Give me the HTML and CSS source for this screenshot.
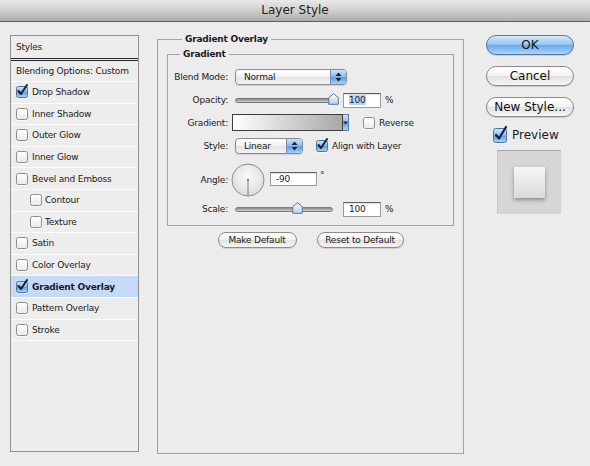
FILE: index.html
```html
<!DOCTYPE html>
<html>
<head>
<meta charset="utf-8">
<title>Layer Style</title>
<link rel="stylesheet" href="styles.css">
</head>
<body>
<div class="titlebar">Layer Style</div>
<div class="dialog">
  <div class="styles-list">
    <div class="row head">Styles</div>
    <div class="row blend">Blending Options: Custom</div>
    <div class="row"><span class="cb on"><svg width="13" height="14" viewBox="0 0 13 14"><path d="M2.5 8 L5 11 L11 2" fill="none" stroke="#18203a" stroke-width="2" stroke-linecap="round" stroke-linejoin="round"/></svg></span>Drop Shadow</div>
    <div class="row"><span class="cb"></span>Inner Shadow</div>
    <div class="row"><span class="cb"></span>Outer Glow</div>
    <div class="row"><span class="cb"></span>Inner Glow</div>
    <div class="row"><span class="cb"></span>Bevel and Emboss</div>
    <div class="row sub"><span class="cb"></span>Contour</div>
    <div class="row sub"><span class="cb"></span>Texture</div>
    <div class="row"><span class="cb"></span>Satin</div>
    <div class="row"><span class="cb"></span>Color Overlay</div>
    <div class="row selected"><span class="cb on"><svg width="13" height="14" viewBox="0 0 13 14"><path d="M2.5 8 L5 11 L11 2" fill="none" stroke="#18203a" stroke-width="2" stroke-linecap="round" stroke-linejoin="round"/></svg></span>Gradient Overlay</div>
    <div class="row"><span class="cb"></span>Pattern Overlay</div>
    <div class="row"><span class="cb"></span>Stroke</div>
  </div>

  <div class="main">
    <div class="group outer">
      <div class="legend outer-legend">Gradient Overlay</div>
      <div class="group inner">
        <div class="legend inner-legend">Gradient</div>
        <div class="form">
          <div class="frow r1">
            <span class="lbl">Blend Mode:</span>
            <div class="popup w-blend"><span class="ptext">Normal</span><span class="stepper"><svg width="7" height="10" viewBox="0 0 7 10"><path d="M3.5 0.5 L6.5 4 L0.5 4 Z M0.5 6 L6.5 6 L3.5 9.5 Z" fill="#1c2433"/></svg></span></div>
          </div>
          <div class="frow r2">
            <span class="lbl">Opacity:</span>
            <div class="slider w-op"><span class="knob k-op"><svg width="11" height="12" viewBox="0 0 11 12"><defs><linearGradient id="kg1" x1="0" y1="0" x2="0" y2="1"><stop offset="0" stop-color="#ffffff"/><stop offset="1" stop-color="#b9cfe6"/></linearGradient></defs><path d="M5.5 0.7 L10.3 4.6 L10.3 11.3 L0.7 11.3 L0.7 4.6 Z" fill="url(#kg1)" stroke="#58779c" stroke-width="1" stroke-linejoin="round"/></svg></span></div>
            <div class="num"><span class="sel">100</span></div>
            <span class="unit">%</span>
          </div>
          <div class="frow r3">
            <span class="lbl">Gradient:</span>
            <div class="gradbox"></div>
            <div class="gradarrow"><svg width="5" height="4" viewBox="0 0 5 4"><path d="M0 0.5 L5 0.5 L2.5 3.5 Z" fill="#1c2433"/></svg></div>
            <span class="cb rev"></span><span class="cbtext">Reverse</span>
          </div>
          <div class="frow r4">
            <span class="lbl">Style:</span>
            <div class="popup w-style"><span class="ptext">Linear</span><span class="stepper"><svg width="7" height="10" viewBox="0 0 7 10"><path d="M3.5 0.5 L6.5 4 L0.5 4 Z M0.5 6 L6.5 6 L3.5 9.5 Z" fill="#1c2433"/></svg></span></div>
            <span class="cb on align"><svg width="13" height="14" viewBox="0 0 13 14"><path d="M2.5 8 L5 11 L11 2" fill="none" stroke="#18203a" stroke-width="2" stroke-linecap="round" stroke-linejoin="round"/></svg></span><span class="cbtext">Align with Layer</span>
          </div>
          <div class="frow r5">
            <span class="lbl">Angle:</span>
            <div class="dial"><svg width="34" height="34" viewBox="0 0 34 34"><defs><radialGradient id="dg" cx="50%" cy="40%" r="60%"><stop offset="0" stop-color="#fbfbfb"/><stop offset="1" stop-color="#dcdcdc"/></radialGradient></defs><circle cx="17" cy="17" r="16" fill="url(#dg)" stroke="#8c8c8c" stroke-width="1"/><line x1="17" y1="17" x2="17" y2="33" stroke="#7d7d7d" stroke-width="1"/><circle cx="17" cy="17" r="1" fill="#6d6d6d"/></svg></div>
            <div class="num angle">-90</div>
            <span class="deg">°</span>
          </div>
          <div class="frow r6">
            <span class="lbl">Scale:</span>
            <div class="slider w-sc"><span class="knob k-sc"><svg width="11" height="12" viewBox="0 0 11 12"><defs><linearGradient id="kg2" x1="0" y1="0" x2="0" y2="1"><stop offset="0" stop-color="#ffffff"/><stop offset="1" stop-color="#b9cfe6"/></linearGradient></defs><path d="M5.5 0.7 L10.3 4.6 L10.3 11.3 L0.7 11.3 L0.7 4.6 Z" fill="url(#kg2)" stroke="#58779c" stroke-width="1" stroke-linejoin="round"/></svg></span></div>
            <div class="num">100</div>
            <span class="unit">%</span>
          </div>
        </div>
      </div>
      <div class="defaults">
        <div class="sbtn w-make">Make Default</div>
        <div class="sbtn w-reset">Reset to Default</div>
      </div>
    </div>
  </div>

  <div class="side">
    <div class="btn ok">OK</div>
    <div class="btn">Cancel</div>
    <div class="btn">New Style...</div>
    <div class="preview-row">
      <span class="cb on big"><svg width="15" height="17" viewBox="0 0 15 17"><path d="M3 10 L6 13.5 L13 2" fill="none" stroke="#18203a" stroke-width="2.2" stroke-linecap="round" stroke-linejoin="round"/></svg></span>
      <span class="ptitle">Preview</span>
    </div>
    <div class="preview-box"><div class="swatch"></div></div>
  </div>
</div>
</body>
</html>
```

FILE: styles.css
```css
html, body {
  margin: 0;
  padding: 0;
  background: #ececec;
}
body {
  font-family: "DejaVu Sans", "Liberation Sans", sans-serif;
  font-size: 9px;
  letter-spacing: -0.2px;
  color: #1a1a1a;
  width: 590px;
  height: 466px;
  overflow: hidden;
}

/* title bar */
.titlebar {
  height: 21px;
  line-height: 21px;
  border-bottom: 1px solid #5f5f5f;
  background: linear-gradient(#e9e9e9, #cfcfcf 50%, #adadad);
  text-align: center;
  font-size: 12px;
  letter-spacing: 0;
  color: #1e1e1e;
}

.dialog {
  display: flex;
  align-items: flex-start;
  padding: 13px 0 0 10px;
}

/* styles list */
.styles-list {
  width: 129px;
  height: 417px;
  box-sizing: border-box;
  border: 1px solid #929292;
  background: #ededed;
  flex: none;
}
.row {
  height: 20.6px;
  border-bottom: 1px solid #fbfbfb;
  display: flex;
  align-items: center;
  padding-left: 5px;
  gap: 4px;
}
.row.head {
  height: 22px;
  border-bottom: 3px double #2a2a2a;
}
.row.blend {
  height: 20px;
}
.row.sub {
  padding-left: 19px;
  gap: 3px;
}
.row.selected {
  background: #c4daf6;
  font-weight: bold;
}

/* checkboxes */
.cb {
  display: inline-block;
  width: 12px;
  height: 12px;
  box-sizing: border-box;
  border: 1px solid #8d8d8d;
  border-radius: 2.5px;
  background: linear-gradient(#ffffff, #eaeaea);
  box-shadow: 0 1px 0 rgba(255,255,255,0.7);
  flex: none;
  position: relative;
}
.cb.on {
  background: linear-gradient(#cde3fb, #85b9ef 50%, #5c9ee6 52%, #a6d0f7);
  border-color: #52709e;
}
.cb.on svg {
  position: absolute;
  left: -1px;
  top: -4px;
}
.cb.big {
  width: 14px;
  height: 15px;
}
.cb.big svg {
  left: -1px;
  top: -4px;
}

/* main */
.main {
  margin-left: 18px;
  margin-top: 4px;
  width: 307px;
  flex: none;
}
.group {
  border: 1px solid #a2a2a2;
}
.group.outer {
  height: 415px;
  box-sizing: border-box;
  padding: 0 9px;
}
.legend {
  display: block;
  width: max-content;
  line-height: 12px;
  height: 12px;
  margin-top: -7px;
  padding: 0 3px;
  background: #ececec;
  font-weight: bold;
}
.outer-legend {
  margin-left: 15px;
}
.inner-legend {
  margin-left: 12px;
}
.group.inner {
  margin-top: 9px;
}
.form {
  padding: 5px 0 8px 0;
}
.frow {
  display: flex;
  align-items: center;
}
.r1 { height: 23px; }
.r2 { height: 24px; }
.r3 { height: 21px; }
.r4 { height: 26px; }
.r5 { height: 42px; }
.r6 { height: 16px; }

.lbl {
  width: 60px;
  text-align: right;
  margin-right: 7px;
  flex: none;
}

/* popups */
.popup {
  display: flex;
  height: 16px;
  box-sizing: border-box;
  border: 1px solid #8b8b8b;
  border-radius: 4px;
  background: linear-gradient(#ffffff, #f2f2f2 50%, #e3e3e3 52%, #f4f4f4);
  box-shadow: 0 1px 1px rgba(0,0,0,0.12);
  overflow: hidden;
}
.w-blend { width: 112px; }
.w-style { width: 68px; }
.ptext {
  flex: 1;
  padding-left: 8px;
  line-height: 14px;
}
.stepper {
  width: 15px;
  border-left: 1px solid #6a8cbc;
  background: linear-gradient(#c9e1fa, #86bbef 50%, #5d9fe7 52%, #a3cff7);
  display: flex;
  align-items: center;
  justify-content: center;
}

/* sliders */
.slider {
  position: relative;
  height: 3px;
  border: 1px solid #7b7b7b;
  border-radius: 3px;
  background: linear-gradient(#8a8a8a, #cfcfcf);
  flex: none;
}
.w-op { width: 99px; margin-right: 7px; }
.w-sc { width: 96px; margin-right: 10px; }
.knob {
  position: absolute;
  top: -6px;
  width: 11px;
  height: 12px;
}
.knob svg { display: block; }
.k-op { left: 92px; }
.k-sc { left: 56px; }

/* number fields */
.num {
  width: 38px;
  height: 15px;
  box-sizing: border-box;
  border: 1px solid #9a9a9a;
  border-top-color: #5e5e5e;
  background: #ffffff;
  padding-left: 5px;
  line-height: 13px;
  box-shadow: inset 0 1px 1px rgba(0,0,0,0.12);
  flex: none;
}
.num .sel {
  background: #b4d4fd;
}
.num.angle {
  width: 47px;
  height: 14px;
  margin-left: 5px;
  margin-top: -3px;
}
.unit {
  margin-left: 4px;
}
.deg {
  margin-left: 3px;
  align-self: flex-start;
  margin-top: 11px;
}

/* gradient row */
.gradbox {
  margin-left: -3px;
  width: 111px;
  height: 17px;
  box-sizing: border-box;
  border: 1px solid #3d3d3d;
  background: linear-gradient(to right, #ffffff, #a8a8a8);
}
.gradarrow {
  width: 6px;
  height: 17px;
  box-sizing: border-box;
  border: 1px solid #5b7aa4;
  border-left: none;
  background: linear-gradient(#c9e1fa, #86bbef 50%, #5d9fe7 52%, #a3cff7);
  display: flex;
  align-items: center;
  justify-content: center;
}
.gradarrow svg { display: block; }
.cb.rev {
  margin-left: 14px;
}
.cb.align {
  margin-left: 13px;
}
.cbtext {
  margin-left: 4px;
}

/* dial */
.dial {
  margin-left: -4px;
  width: 34px;
  height: 34px;
}
.dial svg { display: block; }

/* defaults buttons */
.defaults {
  display: flex;
  justify-content: center;
  gap: 20px;
  margin-top: 6px;
}
.sbtn {
  height: 16px;
  box-sizing: border-box;
  border: 1px solid #8c8c8c;
  border-radius: 8px;
  background: linear-gradient(#ffffff, #f1f1f1 50%, #e2e2e2 52%, #f5f5f5);
  box-shadow: 0 1px 1px rgba(0,0,0,0.12);
  display: flex;
  align-items: center;
  justify-content: center;
}
.w-make { width: 79px; }
.w-reset { width: 87px; }

/* side */
.side {
  margin-left: 22px;
  width: 88px;
  display: flex;
  flex-direction: column;
  align-items: center;
  flex: none;
}
.btn {
  width: 88px;
  height: 20px;
  box-sizing: border-box;
  border: 1px solid #8a8a8a;
  border-radius: 10px;
  background: linear-gradient(#ffffff, #f2f2f2 50%, #e1e1e1 52%, #f6f6f6);
  box-shadow: 0 1px 1px rgba(0,0,0,0.15);
  display: flex;
  align-items: center;
  justify-content: center;
  font-size: 12px;
  letter-spacing: 0;
  color: #111;
  margin-bottom: 11px;
}
.btn.ok {
  background: linear-gradient(#d3e8fc, #92c4f3 50%, #68a8ec 52%, #aad6fb);
  border-color: #5877a4;
}
.preview-row {
  align-self: flex-start;
  margin-left: 7px;
  margin-top: -1px;
  display: flex;
  align-items: center;
  gap: 5px;
  height: 16px;
}
.ptitle {
  font-size: 12px;
  letter-spacing: 0;
}
.preview-box {
  margin-top: 7px;
  margin-left: -2px;
  width: 64px;
  height: 64px;
  box-sizing: border-box;
  background: #d6d6d6;
  border-top: 1px solid #a9a9a9;
  border-left: 1px solid #c6c6c6;
  display: flex;
  align-items: center;
  justify-content: center;
}
.swatch {
  width: 31px;
  height: 31px;
  background: linear-gradient(#f6f6f6, #dadada);
  box-shadow: 0 2px 4px rgba(0,0,0,0.35);
}
```
